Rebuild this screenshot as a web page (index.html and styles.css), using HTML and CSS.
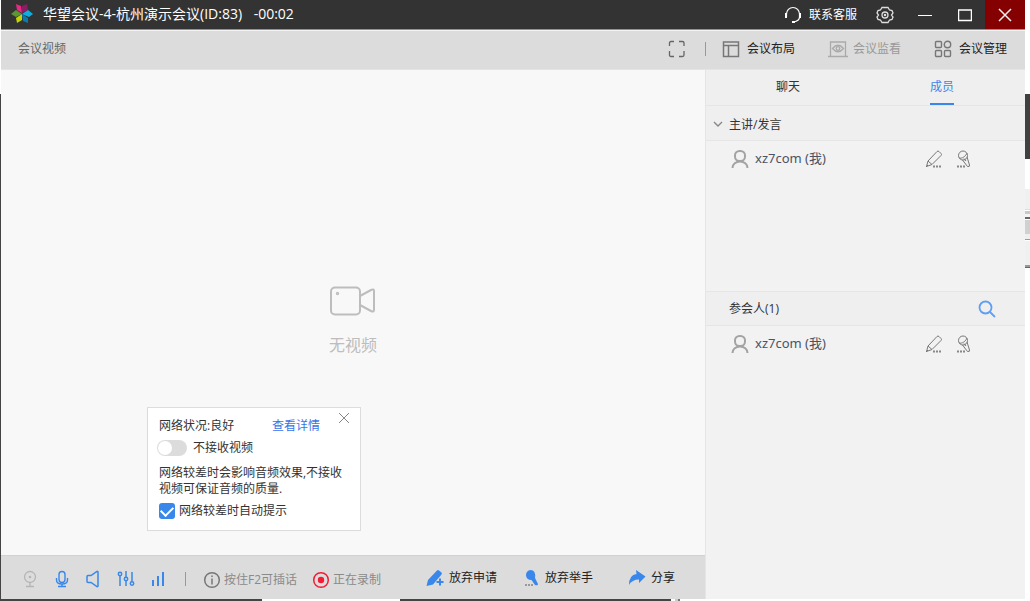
FILE: index.html
```html
<!DOCTYPE html>
<html lang="zh-CN">
<head>
<meta charset="utf-8">
<title>华望会议</title>
<link rel="stylesheet" href="styles.css">
</head>
<body>
<svg class="symbols" aria-hidden="true">
  <symbol id="person" viewBox="0 0 18 20"><g fill="none" stroke="#a3a3a3" stroke-width="2"><rect x="4" y="2" width="10" height="10" rx="4.500"/><path d="M1.500 19c0-4 3.500-6.500 7.500-6.500s7.500 2.500 7.500 6.500"/></g></symbol>
  <symbol id="pen" viewBox="0 0 18 18"><g fill="none" stroke="#777"><path d="M3 11 12 1.500q1-1 2 0l2 2q1 1 0 2L7 14.500M3 11l4 3.500-5.500 2zM1 17l2-2"/><path d="M8 16.500h8" stroke="#888" stroke-width="2" stroke-dasharray="2 1"/></g></symbol>
  <symbol id="handmic" viewBox="0 0 18 18"><g fill="none" stroke="#777"><circle cx="7" cy="5.500" r="4.500"/><path d="M3 8C6 9 10 6 11 3M6.500 10l5 6.500q2.500 .5 2-1.500l-2.500-8M8 8.500l2 2.500"/><path d="M1 16.500h8" stroke="#888" stroke-width="2" stroke-dasharray="2 1"/></g></symbol>
</svg>
<div class="edge-left"></div>
<main class="window">
  <header class="titlebar">
    <svg class="logo" viewBox="0 0 22 20"><path fill="#e52a84" d="M5 0l5 2 1 7-5-3z"/><path fill="#8b1e62" d="M16 0l1 6-6 3 0-7z"/><path fill="#10aee0" d="M22 10l-4 3-7-3 6-4z"/><path fill="#087cae" d="M17 19l-5-2-1-7 6 4z"/><path fill="#c2d500" d="M6 19l-1-5 6-4 0 6z"/><path fill="#5d9434" d="M0 10l5-4 6 4-6 3z"/></svg>
    <h1 class="title">华望会议-4-杭州演示会议(ID:83) <span class="timer">-00:02</span></h1>
    <button class="service"><svg class="ic18" viewBox="0 0 18 18" fill="none" stroke="#fff"><path d="M2.500 11V8a6.500 6.500 0 0 1 13 0v3q0 4-6 5" stroke-width="1.200"/><path d="M2 7v5M16 7v5M8 16h3" stroke-width="2"/></svg>联系客服</button>
    <button class="settings" aria-label="设置"><svg class="ic18" viewBox="0 0 18 18" fill="none" stroke="#ddd" stroke-width="1.300"><path d="M6 1.500h6l1.500 2.500 2.500.5 1 2.500-1.500 2 1.500 2-1 2.500-2.500.5-1.500 2.500H6L4.500 14 2 13.500 1 11l1.500-2L1 7l1-2.500L4.500 4z"/><circle cx="9" cy="9" r="3"/><circle cx="9" cy="9" r=".6"/></svg></button>
    <button class="winbtn" aria-label="最小化"><svg class="ic14" viewBox="0 0 14 14"><path d="M0 7.500h14" stroke="#fff"/></svg></button>
    <button class="winbtn" aria-label="最大化"><svg class="ic14" viewBox="0 0 14 14"><path d="M.5 1.500v11h13v-11M0 2h14" stroke="#fff" fill="none" stroke-width="1.500"/></svg></button>
    <button class="winbtn close" aria-label="关闭"><svg class="ic14" viewBox="0 0 14 14"><path d="M1 1l12 12M13 1L1 13" stroke="#eee" stroke-width="1.500"/></svg></button>
  </header>
  <nav class="toolbar">
    <span class="heading">会议视频</span>
    <button class="expand" aria-label="全屏"><svg class="ic18" viewBox="0 0 18 18" fill="none" stroke="#666" stroke-width="1.300"><path d="M1.500 6V3q0-1.500 1.500-1.500h3M11 1.500h3.500q1.500 0 1.500 1.500v3M16 11v4q0 1.500-1.500 1.500H11M6 16.500H3q-1.500 0-1.500-1.500v-4"/></svg></button>
    <span class="divider"></span>
    <button class="tool layout"><svg class="ic18" viewBox="0 0 18 18" fill="none" stroke="#777" stroke-width="1.500"><path d="M1.500 2h15v14.500h-15zM1.500 5.500h15M6.500 5.500v11"/></svg>会议布局</button>
    <button class="tool monitor" disabled><svg class="ic20" viewBox="0 0 20 18" fill="none" stroke="#aaa" stroke-width="1.300"><path d="M2.500 16V2h15v14M0 16.500h20M4.500 8.500q5.500-6.500 11 0-5.500 6.500-11 0z"/><circle cx="10" cy="8.500" r="1.800"/></svg>会议监看</button>
    <button class="tool"><svg class="ic18" viewBox="0 0 18 18" fill="none" stroke="#777" stroke-width="1.400"><rect x="1.500" y="1.500" width="6" height="6" rx="1"/><circle cx="13.500" cy="4.500" r="3.200"/><rect x="1.500" y="10.500" width="6" height="6" rx="1"/><rect x="10.500" y="10.500" width="6" height="6" rx="1"/></svg>会议管理</button>
  </nav>
  <div class="content">
    <section class="stage">
      <div class="video">
        <div class="empty">
          <svg class="camera" viewBox="0 0 46 30" fill="none" stroke="#bdbdbd" stroke-width="2"><rect x="1" y="1.500" width="29" height="27" rx="4"/><path d="M30 10l11-6q3-1.500 3 1v19q0 2.500-3 1l-11-6"/><circle cx="7.500" cy="7.500" r=".7"/></svg>
          <p class="empty-text">无视频</p>
        </div>
        <div class="popup" role="dialog" aria-label="网络状况">
          <div class="status"><span>网络状况:良好</span><a class="detail" href="#">查看详情</a><button class="dismiss" aria-label="关闭提示"><svg class="ic12" viewBox="0 0 12 12"><path d="M1 1l10 10M11 1L1 11" stroke="#888"/></svg></button></div>
          <label class="option"><input class="switch" type="checkbox">不接收视频</label>
          <p class="note">网络较差时会影响音频效果,不接收视频可保证音频的质量.</p>
          <label class="option prompt"><input class="check" type="checkbox" checked>网络较差时自动提示</label>
        </div>
      </div>
      <footer class="controls">
        <div class="devices">
          <button aria-label="摄像头"><svg class="ic18" viewBox="0 0 18 18" fill="none" stroke="#b5b5b5" stroke-width="1.300"><circle cx="9" cy="7" r="5.500"/><circle cx="9" cy="7" r=".7"/><path d="M9 12.500v4M5 16.500h8"/></svg></button>
          <button aria-label="麦克风"><svg class="ic18" viewBox="0 0 18 18" fill="none" stroke="#3987ea" stroke-width="1.400"><rect x="6" y="1.500" width="6" height="11" rx="3"/><path d="M3.500 8v2q0 4 5.500 4t5.500-4V8M9 14v2.500M5 16.500h8"/></svg></button>
          <button aria-label="扬声器"><svg class="ic18" viewBox="0 0 18 18" fill="none" stroke="#3987ea" stroke-width="1.500"><path d="M3 5.500h3l6-4q1-.5 1 1v13q0 1.500-1 1l-6-4H3q-1 0-1-1v-5q0-1 1-1z"/></svg></button>
          <button aria-label="音量调节"><svg class="ic18" viewBox="0 0 18 18" fill="none" stroke="#3987ea" stroke-width="1.500"><circle cx="3" cy="4" r="1.700"/><circle cx="9" cy="9" r="1.700"/><circle cx="15" cy="13.500" r="1.700"/><path d="M3 6v10M9 1v6M9 11v5M15 2v9.500"/></svg></button>
          <button aria-label="信号"><svg class="ic18" viewBox="0 0 18 18"><path d="M4 10v6M9 6v10M14 2v14" stroke="#3987ea" stroke-width="2"/></svg></button>
        </div>
        <span class="divider"></span>
        <span class="hint"><svg class="ic18" viewBox="0 0 18 18" fill="none" stroke="#777" stroke-width="1.500"><circle cx="9" cy="9" r="7.300"/><path d="M9 4.500V6M9 7.500v6"/></svg>按住F2可插话</span>
        <span class="hint recording"><svg class="ic18" viewBox="0 0 18 18"><circle cx="9" cy="9" r="7.300" fill="none" stroke="#f21c35" stroke-width="1.500"/><circle cx="9" cy="9" r="3.200" fill="#f21c35"/></svg>正在录制</span>
        <div class="actions">
          <button><svg class="ic18" viewBox="0 0 18 18" fill="#3987ea"><path d="M11 1.500q1-1 2 0l2.500 2q.8 1 0 2L7 15.500.5 17 2 11zM13 9.500h2V12h2.500v2H15v2.500h-2V14h-2.500v-2H13z"/></svg>放弃申请</button>
          <button><svg class="ic16" viewBox="0 0 16 18"><path d="M6.500 1a5 5 0 1 0 1 10l3.500 5q3 1 3-1l-3-6q1-8-4.500-8z" fill="#3987ea"/><path d="M1 16h8" stroke="#999" stroke-width="2" stroke-dasharray="2 1"/></svg>放弃举手</button>
          <button class="share"><svg class="ic18" viewBox="0 0 18 18"><path d="M8 1l9.500 6.500L11 14v-3.500Q4 10.500 1 16 1 6 8.500 5z" fill="#3987ea"/></svg>分享</button>
        </div>
      </footer>
    </section>
    <aside class="sidebar">
      <div class="tabs"><button class="tab">聊天</button><button class="tab active">成员</button></div>
      <section class="group speakers">
        <h2 class="group-head"><svg class="ic12" viewBox="0 0 12 12"><path d="M2 3l4 4 4-4" fill="none" stroke="#888" stroke-width="1.400"/></svg>主讲/发言</h2>
        <div class="member"><svg class="avatar"><use href="#person"/></svg><span class="name">xz7com (我)</span><svg class="ic18"><use href="#pen"/></svg><svg class="ic18"><use href="#handmic"/></svg></div>
      </section>
      <section class="group">
        <h2 class="group-head attendees">参会人(1)<button class="search" aria-label="搜索"><svg class="ic18" viewBox="0 0 18 18" fill="none" stroke="#5c9ff5" stroke-width="1.800"><circle cx="7.500" cy="7.500" r="6"/><path d="M12 12l5 5"/></svg></button></h2>
        <div class="member"><svg class="avatar"><use href="#person"/></svg><span class="name">xz7com (我)</span><svg class="ic18"><use href="#pen"/></svg><svg class="ic18"><use href="#handmic"/></svg></div>
      </section>
    </aside>
  </div>
</main>
<div class="edge-right"></div>
<div class="edge-bottom"></div>
</body>
</html>
```

FILE: styles.css
```css
* { box-sizing: border-box; }
body {
  margin: 0;
  height: 100vh;
  display: grid;
  grid-template: minmax(0, 1fr) 2px / 1px minmax(0, 1fr) 5px;
  background: #fff;
  color: #333;
  font: 12px/16px "Open Sans", "Noto Sans CJK SC", sans-serif;
}
button {
  display: flex;
  align-items: center;
  padding: 0;
  border: 0;
  background: none;
  color: inherit;
  font: inherit;
  white-space: nowrap;
}
svg { flex: none; display: block; }
h1, h2, p { margin: 0; font-weight: 400; }
.symbols { position: absolute; width: 0; height: 0; }
.ic12 { width: 12px; height: 12px; }
.ic14 { width: 14px; height: 14px; }
.ic16 { width: 16px; height: 18px; }
.ic18 { width: 18px; height: 18px; }
.ic20 { width: 20px; height: 18px; }

/* desktop showing around the window */
.edge-left { background: linear-gradient(#fff 94px, #444 94px); }
.edge-right {
  background: linear-gradient(#fff 94px, #404040 94px 159px, #fff 159px 189px, #f0f0f0 189px 209px, #ddd 209px 210px, #fff 210px 211px, #c8c8c8 211px 214px, #f4f4f4 214px 217px, #666 217px 219px, #fff 219px 220px, #d0d0d0 220px 234px, #eee 234px 239px, #999 239px 240px, #fff 240px 241px, #f0f0f0 241px 265px, #999 265px 267px, #666 267px 268px, #fff 268px);
}
.edge-bottom {
  grid-column: 1 / -1;
  background: linear-gradient(90deg, #444 262px, #fff 262px 400px, #444 400px 671px, #fff 671px 675px, #ccc 675px 678px, #777 678px 680px, #fff 680px);
}

.window { display: flex; flex-direction: column; min-width: 0; }
.titlebar {
  display: flex;
  align-items: stretch;
  height: 30px;
  padding-left: 10px;
  border-bottom: 1px solid #979090;
  background: #333;
  color: #fff;
}
.logo { width: 22px; height: 20px; margin-top: 4px; }
.title { flex: 1; margin-left: 10px; font-size: 14px; line-height: 28px; white-space: nowrap; }
.timer { margin-left: 8px; }
.service { gap: 7px; }
.settings { margin: 0 11px 0 19px; }
.winbtn { width: 40px; justify-content: center; }
.close { background: #850000; }

.toolbar {
  display: flex;
  align-items: center;
  height: 40px;
  padding: 0 18px 2px 17px;
  border-top: 1px solid #f4f4f4;
  border-bottom: 1px solid #e4e4e4;
  background: #dcdcdc;
  color: #222;
}
.heading { flex: 1; color: #666; }
.expand { margin-right: 19px; }
.divider { width: 1px; height: 14px; background: #999; }
.tool { gap: 7px; margin-left: 33px; }
.layout { margin-left: 16px; }
.monitor { gap: 5px; color: #999; }

.content { flex: 1; display: flex; min-height: 0; }
.stage { flex: 1; display: flex; flex-direction: column; min-width: 0; background: #f8f8f8; }
.video { position: relative; flex: 1; display: flex; align-items: center; justify-content: center; }
.empty { display: flex; flex-direction: column; align-items: center; gap: 17px; padding-top: 18px; }
.camera { width: 46px; height: 30px; }
.empty-text { color: #bdbdbd; font-size: 16px; line-height: 24px; }
.popup {
  position: absolute;
  left: 146px;
  bottom: 24px;
  width: 214px;
  padding: 10px 10px 11px;
  border: 1px solid #dcdcdc;
  background: #fff;
}
.status { display: flex; align-items: center; justify-content: space-between; padding: 0 30px 0 1px; }
.detail { color: #3973e8; text-decoration: none; }
.dismiss { position: absolute; top: 4px; right: 10px; }
.option { display: flex; align-items: center; gap: 6px; margin-top: 6px; }
.switch {
  appearance: none;
  display: flex;
  width: 30px;
  height: 16px;
  margin: 0 0 0 -1px;
  padding: 1px;
  border-radius: 8px;
  background: #dcdcdc;
}
.switch::before { content: ""; width: 14px; height: 14px; border-radius: 7px; background: #fff; }
.note { margin: 9px 0 0; padding: 0 5px 0 1px; line-height: 16px; }
.prompt { gap: 4px; padding-left: 1px; }
.check {
  appearance: none;
  display: flex;
  align-items: center;
  justify-content: center;
  width: 16px;
  height: 16px;
  margin: 0;
  border-radius: 3px;
  background: #3987ea;
}
.check:checked::before {
  content: "";
  width: 10px;
  height: 6px;
  margin-bottom: 3px;
  border: solid #fff;
  border-width: 0 0 2px 2px;
  transform: rotate(-45deg);
}

.controls {
  display: flex;
  align-items: center;
  height: 44px;
  padding: 2px 30px 0 20px;
  border-top: 1px solid #d2d2d2;
  background: #dcdcdc;
  color: #222;
}
.devices { display: flex; gap: 14px; margin-right: 18px; }
.hint { display: flex; align-items: center; gap: 3px; margin-left: 17px; padding-top: 2px; color: #8a8a8a; white-space: nowrap; }
.recording { margin-left: 15px; }
.actions { display: flex; gap: 27px; margin-left: auto; padding-bottom: 2px; }
.actions button { gap: 5px; }
.actions .share { margin-left: 8px; }

.sidebar { width: 320px; border-left: 1px solid #e5e5e5; background: #f2f2f2; }
.tabs { display: flex; height: 36px; padding: 0 6px 2px 5px; border-bottom: 1px solid #e5e5e5; background: #efefef; }
.tab { flex: 1; justify-content: center; }
.active { position: relative; color: #3987ea; }
.active::after { content: ""; position: absolute; bottom: -2px; width: 24px; height: 2px; background: #3987ea; }
.speakers { min-height: 186px; border-bottom: 1px solid #e5e5e5; }
.group-head {
  display: flex;
  align-items: center;
  gap: 5px;
  height: 35px;
  padding: 4px 28px 0 6px;
  border-bottom: 1px solid #e5e5e5;
  background: #efefef;
  font-size: 12px;
}
.attendees { height: 34px; padding: 0 29px 0 23px; }
.search { margin-left: auto; }
.member { display: flex; align-items: center; height: 36px; padding: 0 51px 0 25px; gap: 13px; color: #4b5364; }
.avatar { width: 18px; height: 20px; }
.name { flex: 1; margin-left: -7px; padding-bottom: 2px; font-family: "Noto Sans", "Noto Sans CJK SC", sans-serif; font-size: 13px; }
```
